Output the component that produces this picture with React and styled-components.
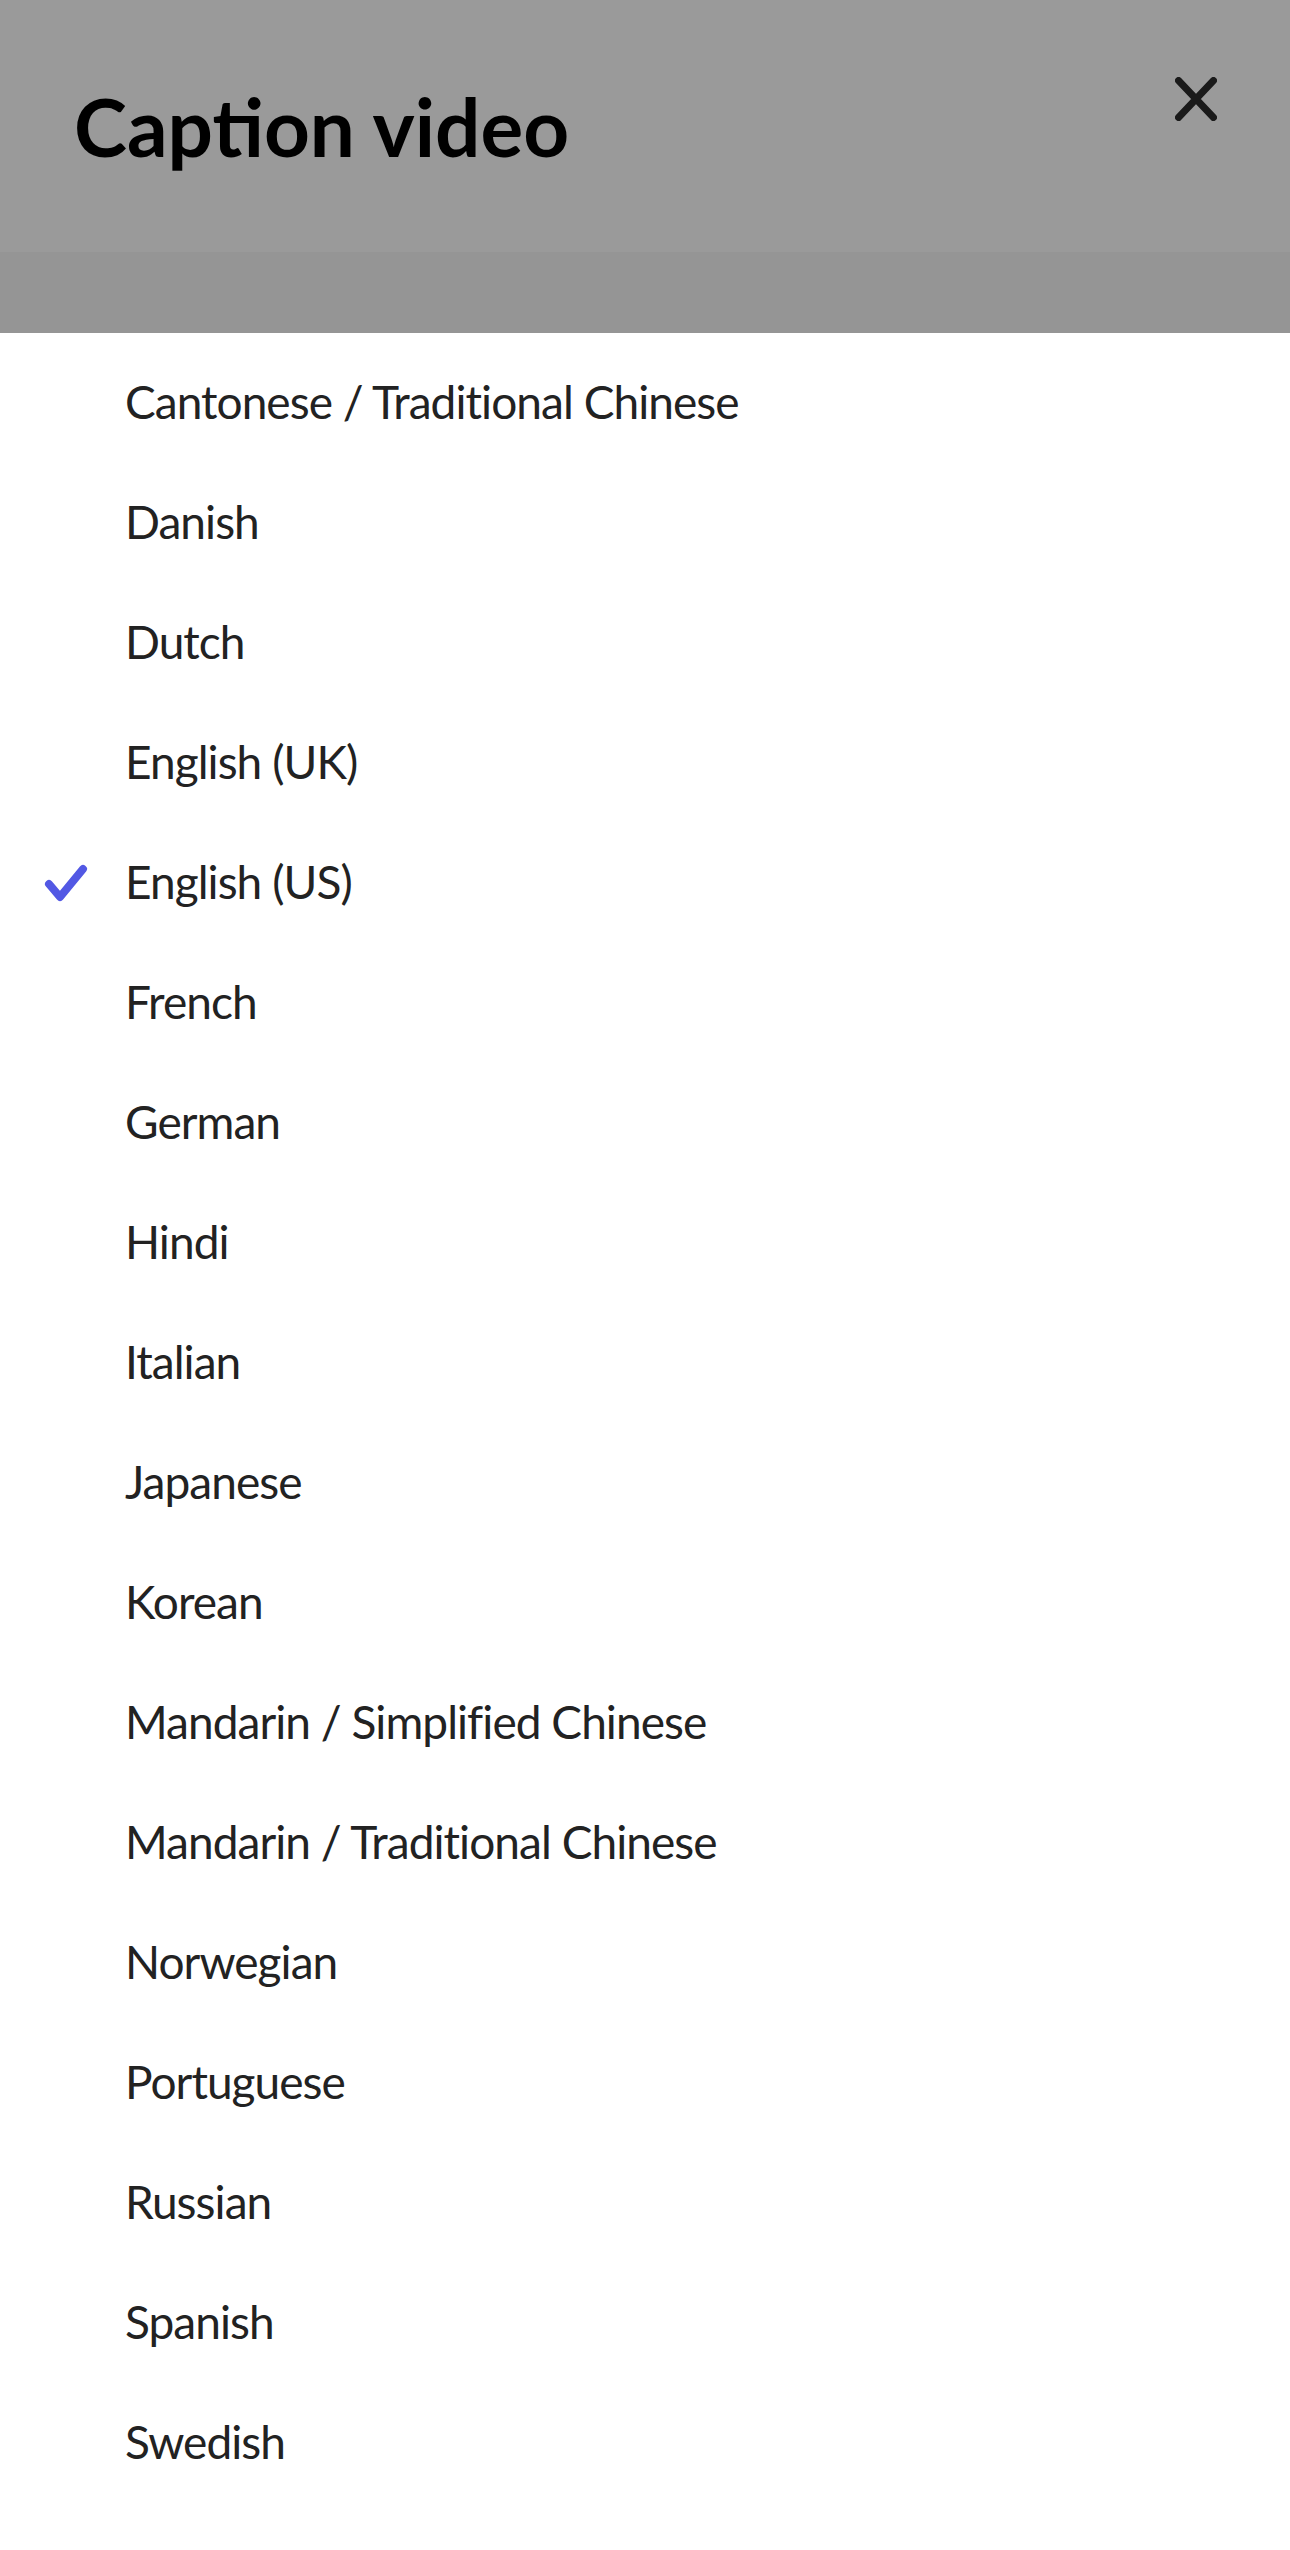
import React from "react";
import styled, { createGlobalStyle } from "styled-components";

const GlobalStyle = createGlobalStyle`
  html, body {
    margin: 0;
    padding: 0;
    background: #ffffff;
  }
  body {
    font-family: Lato, "Open Sans", "Liberation Sans", sans-serif;
    color: #222222;
  }
`;

const Sheet = styled.div`
  width: 1290px;
  min-height: 2550px;
  background: #ffffff;
`;

const Header = styled.header`
  height: 333px;
  display: flex;
  justify-content: space-between;
  align-items: flex-start;
  padding: 0 73px 0 74px;
  box-sizing: border-box;
  background: linear-gradient(
    to bottom,
    #9a9a9a 0px,
    #9a9a9a 252px,
    #959595 252px,
    #959595 333px
  );
`;

const Title = styled.h1`
  margin: 0;
  padding-top: 86px;
  font-size: 80px;
  line-height: 1;
  font-weight: 700;
  color: #000000;
`;

const CloseButton = styled.button`
  margin-top: 77px;
  width: 42px;
  height: 44px;
  padding: 0;
  border: none;
  background: transparent;
  cursor: pointer;
  display: flex;
  align-items: center;
  justify-content: center;
`;

const List = styled.ul`
  list-style: none;
  margin: 0;
  padding: 11px 0 0;
`;

const Item = styled.li`
  height: 120px;
  display: flex;
  align-items: center;
  font-size: 46px;
  letter-spacing: -0.95px;
  color: #222222;
`;

const CheckSlot = styled.span`
  width: 125px;
  flex: 0 0 125px;
  display: flex;
  align-items: center;
  padding-left: 44px;
  box-sizing: border-box;
`;

const Label = styled.span`
  line-height: 1;
  padding-bottom: 4px;
`;

const languages = [
  "Cantonese / Traditional Chinese",
  "Danish",
  "Dutch",
  "English (UK)",
  "English (US)",
  "French",
  "German",
  "Hindi",
  "Italian",
  "Japanese",
  "Korean",
  "Mandarin / Simplified Chinese",
  "Mandarin / Traditional Chinese",
  "Norwegian",
  "Portuguese",
  "Russian",
  "Spanish",
  "Swedish",
];

const CloseIcon = () => (
  <svg width="42" height="44" viewBox="0 0 42 44" fill="none">
    <path
      d="M3.5 3.5L38.5 40.5M38.5 3.5L3.5 40.5"
      stroke="#1a1a1a"
      strokeWidth="7"
      strokeLinecap="round"
    />
  </svg>
);

const CheckIcon = () => (
  <svg width="44" height="40" viewBox="0 0 44 40" fill="none">
    <path
      d="M5 20L16 33L39 5"
      stroke="#5258e4"
      strokeWidth="8"
      strokeLinecap="round"
      strokeLinejoin="round"
    />
  </svg>
);

export default function App() {
  const selected = "English (US)";
  return (
    <Sheet>
      <GlobalStyle />
      <Header>
        <Title>Caption video</Title>
        <CloseButton aria-label="Close">
          <CloseIcon />
        </CloseButton>
      </Header>
      <List>
        {languages.map((lang) => (
          <Item key={lang}>
            <CheckSlot>{lang === selected && <CheckIcon />}</CheckSlot>
            <Label>{lang}</Label>
          </Item>
        ))}
      </List>
    </Sheet>
  );
}
